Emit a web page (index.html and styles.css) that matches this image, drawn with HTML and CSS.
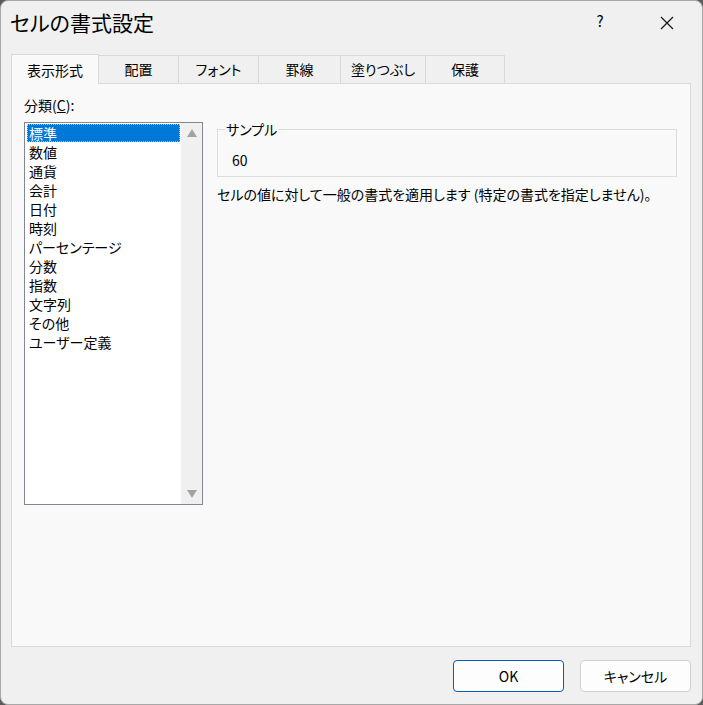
FILE: index.html
```html
<!DOCTYPE html>
<html lang="ja">
  <head>
    <meta charset="UTF-8" />
    <title>セルの書式設定</title>
    <link rel="stylesheet" href="styles.css">
  </head>
  <body>
    <div class="dialog">
      <!-- title bar -->
      <div class="titlebar">
        <span class="title">セルの書式設定</span>
        <span class="help">?</span>
        <span class="close">
          <svg width="14" height="14" viewBox="0 0 14 14">
            <path d="M1 1 L13 13 M13 1 L1 13" stroke="#1a1a1a" stroke-width="1.3" fill="none" />
          </svg>
        </span>
      </div>

      <!-- tab strip -->
      <div class="tabs">
        <div class="tab active">表示形式</div>
        <div class="tab t-align">配置</div>
        <div class="tab t-font">フォント</div>
        <div class="tab t-border">罫線</div>
        <div class="tab t-fill">塗りつぶし</div>
        <div class="tab t-protect">保護</div>
      </div>

      <div class="panel">
        <div class="left">
          <div class="label">分類(<u>C</u>):</div>
          <div class="listbox">
            <ul class="items">
              <li class="selected">標準</li>
              <li>数値</li>
              <li>通貨</li>
              <li>会計</li>
              <li>日付</li>
              <li>時刻</li>
              <li>パーセンテージ</li>
              <li>分数</li>
              <li>指数</li>
              <li>文字列</li>
              <li>その他</li>
              <li>ユーザー定義</li>
            </ul>
            <div class="scrollbar">
              <span class="arrow up"></span>
              <span class="arrow down"></span>
            </div>
          </div>
        </div>

        <div class="right">
          <fieldset class="sample">
            <legend>サンプル</legend>
            <div class="sample-value">60</div>
          </fieldset>
          <p class="desc">セルの値に対して一般の書式を適用します (特定の書式を指定しません)。</p>
        </div>
      </div>

      <div class="footer">
        <button class="btn ok">OK</button>
        <button class="btn">キャンセル</button>
      </div>
    </div>
  </body>
</html>
```

FILE: styles.css
```css
html, body {
  margin: 0;
  padding: 0;
  background: #5c5c5c;
}
body {
  font-family: "Noto Sans CJK JP", "Noto Sans", sans-serif;
  font-size: 14px;
  color: #000;
  font-feature-settings: "palt";
}
.dialog {
  box-sizing: border-box;
  width: 703px;
  height: 705px;
  background: #f0f0f0;
  border: 1px solid #a8a8a8;
  border-radius: 8px;
  display: flex;
  flex-direction: column;
  overflow: hidden;
}

/* title bar */
.titlebar {
  height: 43px;
  display: flex;
  align-items: center;
  padding-left: 9px;
  flex-shrink: 0;
}
.title {
  font-size: 21px;
  flex: 1;
  margin-top: -2px;
}
.help {
  font-size: 15px;
  width: 20px;
  text-align: center;
  margin-right: 50px;
  margin-top: -4px;
}
.close {
  width: 14px;
  height: 14px;
  margin-right: 28px;
  display: flex;
}

/* tabs */
.tabs {
  display: flex;
  align-items: flex-end;
  margin: 10px 0 0 10px;
  height: 29px;
  position: relative;
  z-index: 1;
}
.tab {
  box-sizing: border-box;
  height: 28px;
  background: #f0f0f0;
  border: 1px solid #d9d9d9;
  border-bottom: none;
  border-left: none;
  text-align: center;
  line-height: 27px;
}
.tab.active {
  height: 30px;
  margin-bottom: -1px;
  background: #f9f9f9;
  border-left: 1px solid #d9d9d9;
  width: 88px;
  line-height: 30px;
}
.t-align { width: 80px; }
.t-font { width: 80px; }
.t-border { width: 82px; }
.t-fill { width: 85px; }
.t-protect { width: 79px; }

/* main panel */
.panel {
  box-sizing: border-box;
  margin: 0 11px 0 10px;
  height: 564px;
  background: #f9f9f9;
  border: 1px solid #d9d9d9;
  display: flex;
  padding: 11px 13px 0 12px;
  flex-shrink: 0;
}
.left {
  width: 179px;
  flex-shrink: 0;
}
.label {
  line-height: 20px;
  margin-bottom: 7px;
}
.listbox {
  box-sizing: border-box;
  width: 179px;
  height: 383px;
  border: 1px solid #828790;
  background: #fff;
  display: flex;
}
.items {
  list-style: none;
  margin: 0;
  padding: 1px 0 0 2px;
  flex: 1;
}
.items li {
  height: 19px;
  line-height: 19px;
  padding-left: 2px;
  margin-right: 1px;
}
.items li.selected {
  background: #0078d7;
  color: #fff;
  height: 18px;
  line-height: 18px;
  margin-bottom: 1px;
  outline: 1px dotted #9ec8ea;
  outline-offset: -1px;
}
.scrollbar {
  width: 21px;
  background: #f0f0f0;
  display: flex;
  flex-direction: column;
  justify-content: space-between;
  align-items: center;
  padding: 6px 0 6px;
}
.arrow {
  width: 0;
  height: 0;
  border-left: 5px solid transparent;
  border-right: 5px solid transparent;
}
.arrow.up { border-bottom: 8px solid #a3a3a3; }
.arrow.down { border-top: 8px solid #a3a3a3; }

.right {
  flex: 1;
  margin-left: 14px;
  padding-top: 26px;
}
.sample {
  margin: 0;
  padding: 0 0 6px 7px;
  border: 1px solid #dcdcdc;
  width: 451px;
  box-sizing: content-box;
}
.sample legend {
  padding: 0 1px;
  line-height: 16px;
}
.sample-value {
  padding-left: 7px;
  line-height: 20px;
  margin-top: 13px;
}
.desc {
  margin: 7px 0 0 0;
  line-height: 20px;
}

/* buttons */
.footer {
  display: flex;
  justify-content: flex-end;
  gap: 16px;
  padding: 13px 11px 0 0;
}
.btn {
  box-sizing: border-box;
  width: 111px;
  height: 32px;
  font-family: inherit;
  font-size: 14px;
  font-feature-settings: "palt";
  background: #fdfdfd;
  border: 1px solid #d0d0d0;
  border-radius: 4px;
  color: #000;
}
.btn.ok {
  border: 1px solid #005fb8;
}
```
